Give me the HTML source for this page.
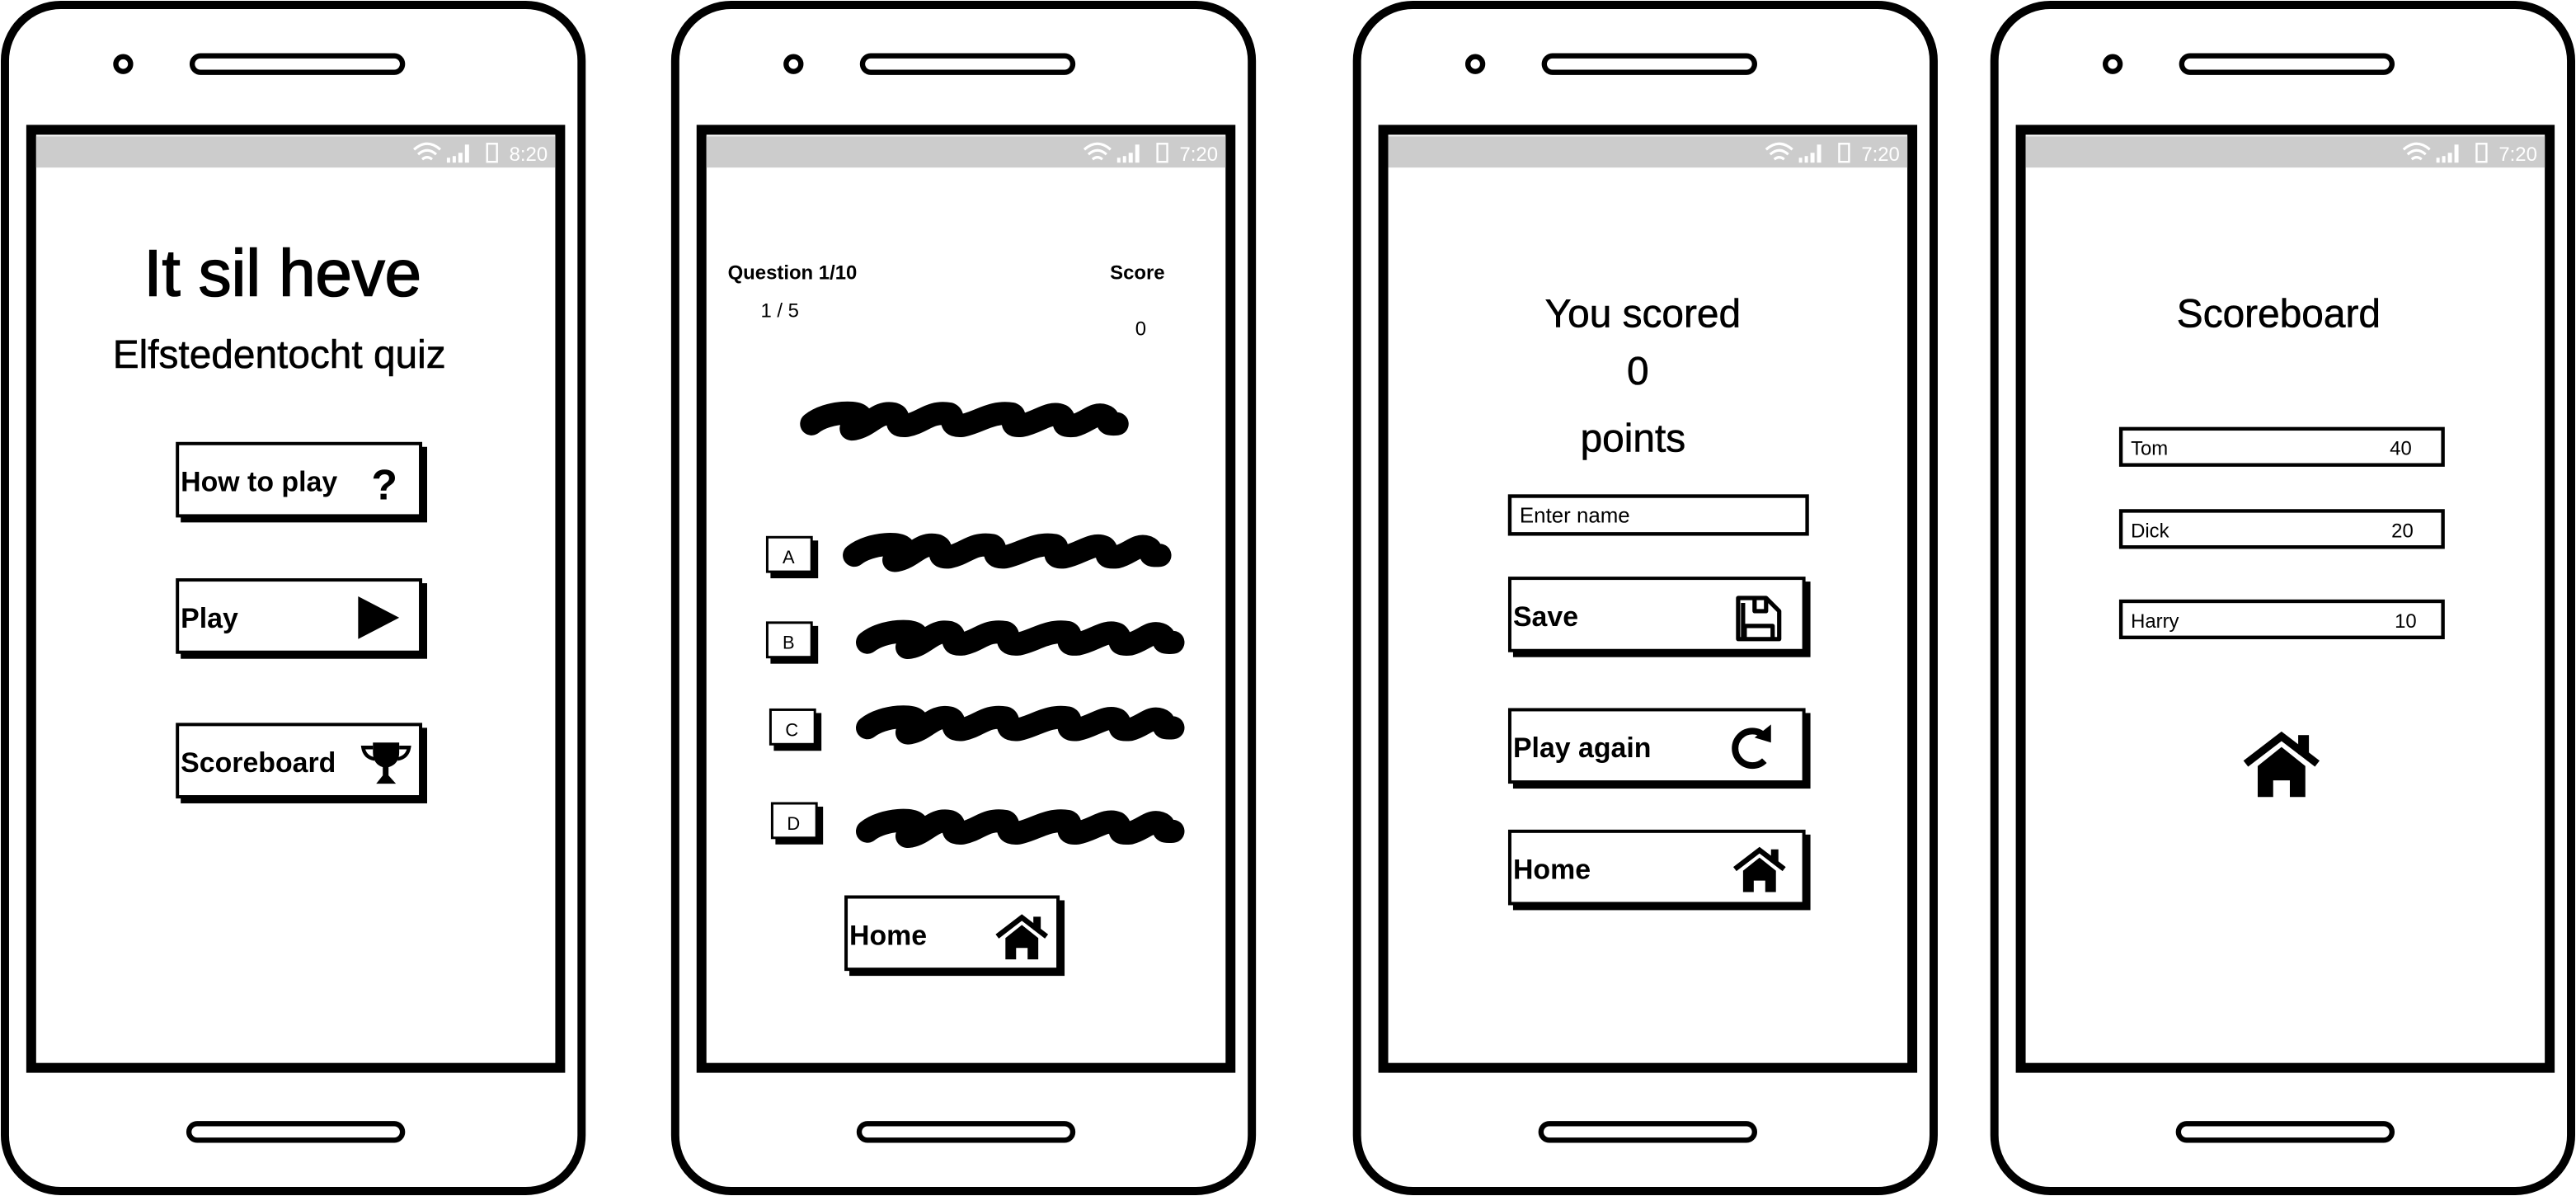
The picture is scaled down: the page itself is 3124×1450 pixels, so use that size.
<!DOCTYPE html>
<html><head><meta charset="utf-8"><style>
html,body{margin:0;padding:0;background:#fff;width:3124px;height:1450px;overflow:hidden}
svg{display:block}
text{font-family:"Liberation Sans",sans-serif;fill:#000}
</style></head><body>
<svg width="3124" height="1450" viewBox="0 0 1568 728" preserveAspectRatio="none" xmlns="http://www.w3.org/2000/svg">
<defs>
<g id="phone">
 <rect x="3" y="3" width="351" height="722" rx="34" fill="#fff" stroke="#000" stroke-width="5"/>
 <rect x="19" y="79" width="322" height="571" fill="#fff" stroke="#000" stroke-width="6"/>
 <rect x="22" y="83" width="316" height="19" fill="#ccc"/>
 <circle cx="75" cy="39" r="4.5" fill="none" stroke="#000" stroke-width="3.2"/>
 <rect x="117" y="34" width="128" height="10" rx="5" fill="none" stroke="#000" stroke-width="3.2"/>
 <rect x="115" y="684" width="130" height="10" rx="5" fill="none" stroke="#000" stroke-width="3.2"/>
 <path d="M252 91 Q260 84 268 91 M254.5 94 Q260 89 265.5 94 M257 97 Q260 94.5 263 97" fill="none" stroke="#fff" stroke-width="1.6"/>
 <rect x="272" y="96" width="2" height="3" fill="#fff"/><rect x="275.5" y="95" width="2" height="4" fill="#fff"/><rect x="279" y="93" width="2.5" height="6" fill="#fff"/><rect x="283" y="88" width="2.5" height="11" fill="#fff"/>
 <rect x="296.5" y="87.5" width="6" height="11" fill="none" stroke="#fff" stroke-width="1.2"/>
</g>
<g id="btnbox">
 <rect x="3" y="3" width="150" height="46" fill="#000"/>
 <rect x="1" y="1" width="148" height="44" fill="#fff" stroke="#000" stroke-width="2"/>
</g>
<g id="home">
 <path d="M0 13 L15 1.5 L30 13" fill="none" stroke="#000" stroke-width="3.2" stroke-linejoin="miter"/>
 <rect x="22" y="1" width="4.5" height="8" fill="#000"/>
 <path d="M5 14 L15 6 L25 14 V27 H18.5 V20 H11.5 V27 H5 Z" fill="#000"/>
</g>
<path id="scrib" d="M0 10 C10 2 30 2 30 6 C30 10 20 14 26 13 C36 11 40 2 50 4 C56 6 48 12 58 11 C68 9 72 2 84 4 C88 6 82 12 92 11 C102 9 110 2 122 4 C126 6 118 12 128 11 C138 9 145 2 152 5 C156 8 150 12 160 11 C168 9 172 3 178 5 C184 7 176 11 186 10" fill="none" stroke="#000" stroke-width="14" stroke-linecap="round" stroke-linejoin="round"/>
</defs>

<!-- Phone 1 -->
<use href="#phone" x="0" y="0"/>
<text x="310" y="98" font-size="12" style="fill:#fff">8:20</text>
<text x="172" y="180" font-size="40" text-anchor="middle" stroke="#000" stroke-width="0.8">It sil heve</text>
<text x="170" y="224" font-size="24" text-anchor="middle" stroke="#000" stroke-width="0.3">Elfstedentocht quiz</text>
<use href="#btnbox" x="107" y="269"/>
<text x="110" y="299" font-size="17" font-weight="bold">How to play</text>
<text x="234" y="304" font-size="26" font-weight="bold" text-anchor="middle">?</text>
<use href="#btnbox" x="107" y="352"/>
<text x="110" y="382" font-size="17" font-weight="bold">Play</text>
<path d="M218 363 L243 376 L218 389 Z" fill="#000"/>
<use href="#btnbox" x="107" y="440"/>
<text x="110" y="470" font-size="17" font-weight="bold">Scoreboard</text>
<path d="M227 452 H243 V458 Q243 465 236.5 467 V472 L241 477 H229 L233 472 V467 Q227 465 227 458 Z" fill="#000"/>
<path d="M227 455 H221 Q222 461 228 462 M243 455 H249 Q248 461 242 462" fill="none" stroke="#000" stroke-width="2.2"/>

<!-- Phone 2 -->
<use href="#phone" x="408" y="0"/>
<text x="718" y="98" font-size="12" style="fill:#fff">7:20</text>
<text x="443" y="170" font-size="12" font-weight="bold">Question 1/10</text>
<text x="709" y="170" font-size="12" font-weight="bold" text-anchor="end">Score</text>
<text x="463" y="193" font-size="12">1 / 5</text>
<text x="691" y="204" font-size="12">0</text>
<use href="#scrib" x="494" y="248"/>
<g><rect x="469" y="329" width="29" height="23" fill="#000"/><rect x="467" y="327" width="27" height="21" fill="#fff" stroke="#000" stroke-width="1.5"/><text x="480" y="343" font-size="11" text-anchor="middle">A</text></g>
<use href="#scrib" x="520" y="328"/>
<g><rect x="469" y="381" width="29" height="23" fill="#000"/><rect x="467" y="379" width="27" height="21" fill="#fff" stroke="#000" stroke-width="1.5"/><text x="480" y="395" font-size="11" text-anchor="middle">B</text></g>
<use href="#scrib" x="528" y="381"/>
<g><rect x="471" y="434" width="29" height="23" fill="#000"/><rect x="469" y="432" width="27" height="21" fill="#fff" stroke="#000" stroke-width="1.5"/><text x="482" y="448" font-size="11" text-anchor="middle">C</text></g>
<use href="#scrib" x="528" y="433"/>
<g><rect x="472" y="491" width="29" height="23" fill="#000"/><rect x="470" y="489" width="27" height="21" fill="#fff" stroke="#000" stroke-width="1.5"/><text x="483" y="505" font-size="11" text-anchor="middle">D</text></g>
<use href="#scrib" x="528" y="496"/>
<g transform="translate(514,545)"><rect x="3" y="3" width="131" height="46" fill="#000"/><rect x="1" y="1" width="129" height="44" fill="#fff" stroke="#000" stroke-width="2"/></g>
<text x="517" y="575" font-size="17" font-weight="bold">Home</text>
<use href="#home" x="607" y="557"/>

<!-- Phone 3 -->
<use href="#phone" x="823" y="0"/>
<text x="1133" y="98" font-size="12" style="fill:#fff">7:20</text>
<text x="1000" y="199" font-size="24" text-anchor="middle" stroke="#000" stroke-width="0.3">You scored</text>
<text x="997" y="234" font-size="24" text-anchor="middle" stroke="#000" stroke-width="0.3">0</text>
<text x="994" y="275" font-size="24" text-anchor="middle" stroke="#000" stroke-width="0.3">points</text>
<rect x="919" y="302" width="181" height="23" fill="#fff" stroke="#000" stroke-width="2.2"/>
<text x="925" y="318" font-size="13">Enter name</text>
<g transform="translate(918,351)"><rect x="3" y="3" width="181" height="46" fill="#000"/><rect x="1" y="1" width="179" height="44" fill="#fff" stroke="#000" stroke-width="2"/></g>
<text x="921" y="381" font-size="17" font-weight="bold">Save</text>
<path d="M1058 364 H1075 L1083 372 V389 H1058 Z M1061 367 V389 M1068 364 V372 H1075 V364 M1062 389 V381 H1079 V389" fill="none" stroke="#000" stroke-width="2.6" stroke-linejoin="round"/>
<g transform="translate(918,431)"><rect x="3" y="3" width="181" height="46" fill="#000"/><rect x="1" y="1" width="179" height="44" fill="#fff" stroke="#000" stroke-width="2"/></g>
<text x="921" y="461" font-size="17" font-weight="bold">Play again</text>
<path d="M1074 448 A10.5 10.5 0 1 0 1074 463" fill="none" stroke="#000" stroke-width="4"/>
<path d="M1068 449 L1078 441 V452 Z" fill="#000"/>
<g transform="translate(918,505)"><rect x="3" y="3" width="181" height="46" fill="#000"/><rect x="1" y="1" width="179" height="44" fill="#fff" stroke="#000" stroke-width="2"/></g>
<text x="921" y="535" font-size="17" font-weight="bold">Home</text>
<use href="#home" x="1056" y="516"/>

<!-- Phone 4 -->
<use href="#phone" x="1211" y="0"/>
<text x="1521" y="98" font-size="12" style="fill:#fff">7:20</text>
<text x="1387" y="199" font-size="24" text-anchor="middle" stroke="#000" stroke-width="0.3">Scoreboard</text>
<rect x="1291" y="261" width="196" height="22" fill="#fff" stroke="#000" stroke-width="2.2"/>
<text x="1297" y="277" font-size="12">Tom</text><text x="1468" y="277" font-size="12" text-anchor="end">40</text>
<rect x="1291" y="311" width="196" height="22" fill="#fff" stroke="#000" stroke-width="2.2"/>
<text x="1297" y="327" font-size="12">Dick</text><text x="1469" y="327" font-size="12" text-anchor="end">20</text>
<rect x="1291" y="366" width="196" height="22" fill="#fff" stroke="#000" stroke-width="2.2"/>
<text x="1297" y="382" font-size="12">Harry</text><text x="1471" y="382" font-size="12" text-anchor="end">10</text>
<g transform="translate(1367,446) scale(1.45)"><use href="#home"/></g>
</svg>
</body></html>
